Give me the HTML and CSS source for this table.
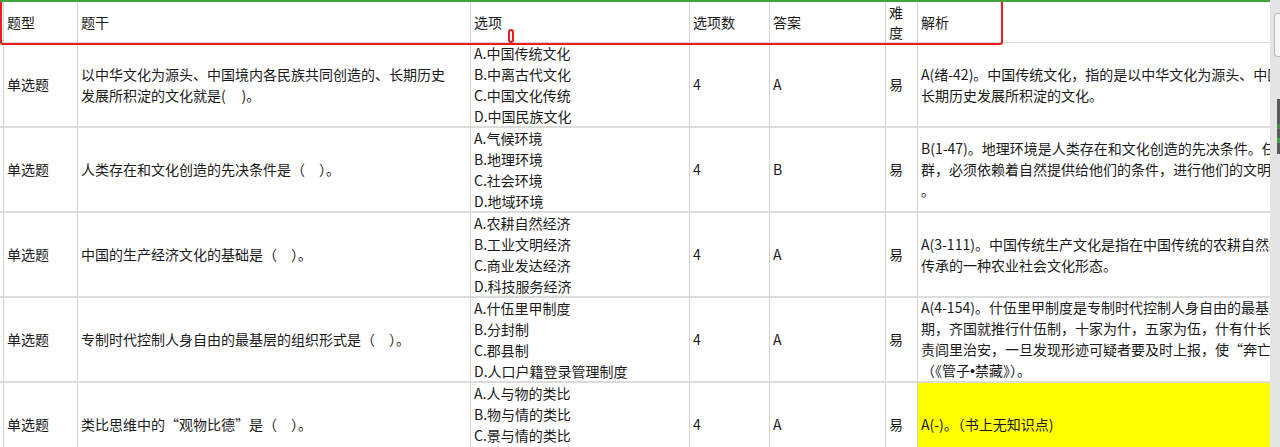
FILE: index.html
```html
<!DOCTYPE html>
<html lang="zh-CN">
<head>
<meta charset="utf-8">
<title>题库</title>
<link rel="stylesheet" href="styles.css">
</head>
<body>
<div class="app">
  <div class="sheet">
    <div class="row head">
      <div class="cell stub"></div>
      <div class="cell">题型</div>
      <div class="cell">题干</div>
      <div class="cell">选项</div>
      <div class="cell">选项数</div>
      <div class="cell">答案</div>
      <div class="cell tight">难<br>度</div>
      <div class="cell">解析</div>
    </div>

    <div class="row">
      <div class="cell stub"></div>
      <div class="cell">单选题</div>
      <div class="cell">以中华文化为源头、中国境内各民族共同创造的、长期历史<br>发展所积淀的文化就是(&nbsp;&nbsp;&nbsp;&nbsp;&nbsp;)。</div>
      <div class="cell">A.中国传统文化<br>B.中离古代文化<br>C.中国文化传统<br>D.中国民族文化</div>
      <div class="cell">4</div>
      <div class="cell">A</div>
      <div class="cell">易</div>
      <div class="cell">A(绪-42)。中国传统文化，指的是以中华文化为源头、中国境内各民族共同创造的、<br>长期历史发展所积淀的文化。</div>
    </div>

    <div class="row">
      <div class="cell stub"></div>
      <div class="cell">单选题</div>
      <div class="cell">人类存在和文化创造的先决条件是（　）。</div>
      <div class="cell">A.气候环境<br>B.地理环境<br>C.社会环境<br>D.地域环境</div>
      <div class="cell">4</div>
      <div class="cell">B</div>
      <div class="cell">易</div>
      <div class="cell">B(1-47)。地理环境是人类存在和文化创造的先决条件。任何民族、任何社会、任何人<br>群，必须依赖着自然提供给他们的条件，进行他们的文明创造活动<br>。</div>
    </div>

    <div class="row">
      <div class="cell stub"></div>
      <div class="cell">单选题</div>
      <div class="cell">中国的生产经济文化的基础是（　）。</div>
      <div class="cell">A.农耕自然经济<br>B.工业文明经济<br>C.商业发达经济<br>D.科技服务经济</div>
      <div class="cell">4</div>
      <div class="cell">A</div>
      <div class="cell">易</div>
      <div class="cell">A(3-111)。中国传统生产文化是指在中国传统的农耕自然经济条件下形成，并世代<br>传承的一种农业社会文化形态。</div>
    </div>

    <div class="row">
      <div class="cell stub"></div>
      <div class="cell">单选题</div>
      <div class="cell">专制时代控制人身自由的最基层的组织形式是（　）。</div>
      <div class="cell">A.什伍里甲制度<br>B.分封制<br>C.郡县制<br>D.人口户籍登录管理制度</div>
      <div class="cell">4</div>
      <div class="cell">A</div>
      <div class="cell">易</div>
      <div class="cell"><div class="txt">A(4-154)。什伍里甲制度是专制时代控制人身自由的最基层组织形式。早在春秋时<br>期，齐国就推行什伍制，十家为什，五家为伍，什有什长，伍有伍长，负<br>责闾里治安，一旦发现形迹可疑者要及时上报，使“奔亡者无所匿，迁徙者无所容”<br>（《管子<span class="dot">•</span>禁藏》）。</div></div>
    </div>

    <div class="row">
      <div class="cell stub"></div>
      <div class="cell">单选题</div>
      <div class="cell">类比思维中的“观物比德”是（　）。</div>
      <div class="cell">A.人与物的类比<br>B.物与情的类比<br>C.景与情的类比<br>D.人与情的类比</div>
      <div class="cell">4</div>
      <div class="cell">A</div>
      <div class="cell">易</div>
      <div class="cell mark">A(-)。（书上无知识点)</div>
    </div>

    <div class="annot-box"></div>
    <div class="annot-pill"></div>
  </div>

  <div class="scrollbar">
    <div class="thumb"></div>
    <div class="minimap"></div>
  </div>
</div>
</body>
</html>
```

FILE: styles.css
```css
html, body {
  margin: 0;
  padding: 0;
  background: #ffffff;
}

body {
  overflow: hidden;
  height: 447px;
  font-family: "Noto Sans CJK SC", "Microsoft YaHei", sans-serif;
  font-size: 14px;
  color: #1a1a1a;
}

.app {
  display: flex;
  height: 447px;
}

.sheet {
  position: relative;
  width: 1270px;
  flex: none;
  overflow: hidden;
  border-top: 2px solid #3fa23f;
}

.row {
  display: grid;
  grid-template-columns: 4px 74px 393px 219px 80px 116px 32px 700px;
  height: 85px;
}

.row.head {
  height: 41px;
}

.cell {
  box-sizing: border-box;
  display: flex;
  align-items: center;
  padding: 0 2px 0 3px;
  border-right: 1px solid #d2d2d2;
  border-bottom: 2px solid #dcdcdc;
  line-height: 21px;
  white-space: nowrap;
  overflow: hidden;
}

.row.head .cell {
  border-bottom: 1px solid #dcdcdc;
}

.cell.tight {
  line-height: 20px;
}

.cell.stub {
  padding: 0;
}

.cell.mark {
  background: #ffff00;
}

.dot {
  font-family: "Liberation Sans", sans-serif;
}

.annot-box {
  position: absolute;
  left: 0;
  top: -2px;
  width: 1003px;
  height: 45px;
  box-sizing: border-box;
  border: 2.5px solid #ee1c1c;
  border-radius: 3px;
}

.annot-pill {
  position: absolute;
  left: 508px;
  top: 27px;
  width: 6px;
  height: 14px;
  box-sizing: border-box;
  border: 2px solid #ee1c1c;
  border-radius: 3px;
}

.scrollbar {
  width: 10px;
  flex: none;
  background: #e4e4e4;
  display: flex;
  flex-direction: column;
  align-items: flex-end;
}

.thumb {
  margin-top: 13px;
  width: 5px;
  height: 42px;
  background: #f6f6f6;
  border: 1px solid #b8b8b8;
  border-right: none;
  border-radius: 4px 0 0 4px;
}

.minimap {
  margin-top: 42px;
  width: 3px;
  height: 55px;
  background: linear-gradient(#5a5a5a 0 45%, #3f8f3f 45% 55%, #5a5a5a 55% 70%, #47a047 70% 80%, #5a5a5a 80%);
}
```
